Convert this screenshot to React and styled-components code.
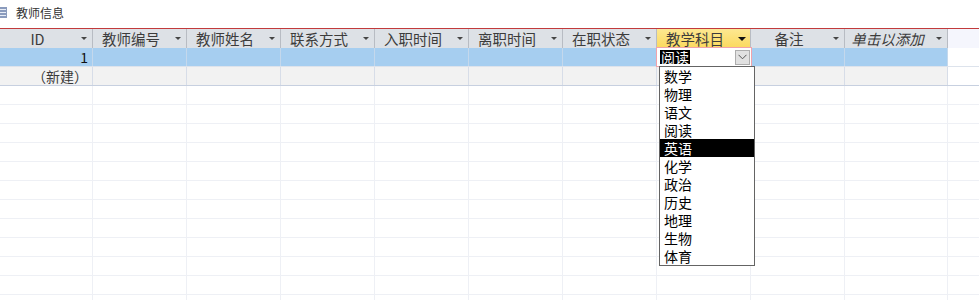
import styled, { createGlobalStyle } from "styled-components";

const GlobalStyle = createGlobalStyle`
  html, body {
    margin: 0;
    padding: 0;
    background: #ffffff;
  }
  body {
    font-family: "Noto Sans CJK SC", "Noto Sans", sans-serif;
    overflow: hidden;
  }
`;

const Page = styled.div`
  position: relative;
  width: 979px;
  height: 300px;
  overflow: hidden;
  background: #ffffff;
`;

const TitleBar = styled.div`
  box-sizing: border-box;
  height: 29px;
  display: flex;
  align-items: center;
  gap: 9px;
  padding-bottom: 4px;
  border-bottom: 1px solid #c23a3c;
  font-size: 12px;
  color: #333333;
`;

const HeaderRow = styled.div`
  display: flex;
  height: 19px;
  background: #f5f6fd;
`;

const HeaderCell = styled.div`
  box-sizing: border-box;
  flex: none;
  width: ${(p) => p.$w}px;
  height: 19px;
  display: flex;
  align-items: center;
  border-right: 1px solid #b8bcc3;
  background: ${(p) =>
    p.$active ? "linear-gradient(#fde891, #fbd95e)" : "#dde1e6"};
  color: #3c3c3c;
  font-size: 14.5px;
  font-style: ${(p) => (p.$italic ? "italic" : "normal")};
`;

const HeaderLabel = styled.span`
  flex: 1;
  text-align: center;
  white-space: nowrap;
  line-height: 19px;
`;

const SortArrow = styled.span`
  flex: none;
  width: 17px;
  display: flex;
  justify-content: center;

  &::after {
    content: "";
    border-left: ${(p) => (p.$active ? 4 : 3)}px solid transparent;
    border-right: ${(p) => (p.$active ? 4 : 3)}px solid transparent;
    border-top: ${(p) => (p.$active ? 4 : 3)}px solid
      ${(p) => (p.$active ? "#111" : "#454545")};
  }
`;

const rowTheme = {
  selected: { bg: "#a6cef0", col: "#c4d8ec", bottom: "#dde3ec" },
  fresh: { bg: "#f2f2f2", col: "#d7dde8", bottom: "#c7d0e0" },
  empty: { bg: "#ffffff", col: "#eef0f5", bottom: "#eef0f5" },
};

const Row = styled.div`
  display: flex;
  height: 19px;
  box-sizing: border-box;
  border-bottom: 1px solid ${(p) => rowTheme[p.$kind].bottom};
`;

const Cell = styled.div`
  box-sizing: border-box;
  flex: none;
  width: ${(p) => p.$w}px;
  height: 18px;
  border-right: 1px solid ${(p) => rowTheme[p.$kind].col};
  background: ${(p) => rowTheme[p.$kind].bg};
  padding-right: 4px;
  text-align: right;
  font-size: 14px;
  line-height: 18px;
  color: ${(p) => (p.$muted ? "#3a3a3a" : "#111111")};
  white-space: nowrap;
`;

const ComboCell = styled.div`
  position: relative;
  z-index: 2;
  box-sizing: border-box;
  flex: none;
  width: ${(p) => p.$w}px;
  height: 18px;
  display: flex;
  align-items: center;
  padding-left: 3px;
  background: #ffffff;
  box-shadow: 0 0 0 1px #f1a3ab;
`;

const ComboText = styled.span`
  display: inline-block;
  height: 14px;
  background: #000000;
  color: #ffffff;
  font-size: 14px;
  line-height: 14px;
  padding: 0 1px;
`;

const DropButton = styled.div`
  box-sizing: border-box;
  margin-left: auto;
  margin-right: 1px;
  width: 15px;
  height: 15px;
  display: flex;
  align-items: center;
  justify-content: center;
  background: #e1e1e1;
  border: 1px solid #adadad;
`;

const DropList = styled.ul`
  position: absolute;
  left: 2px;
  top: 18px;
  box-sizing: border-box;
  width: 96px;
  margin: 0;
  padding: 0;
  list-style: none;
  background: #ffffff;
  border: 1px solid #646464;
`;

const DropItem = styled.li`
  height: 18px;
  padding-left: 4px;
  font-size: 14px;
  line-height: 18px;
  background: ${(p) => (p.$hot ? "#000000" : "transparent")};
  color: ${(p) => (p.$hot ? "#ffffff" : "#000000")};
`;

const Filler = styled.div`
  flex: 1;
`;

const columns = [
  { name: "ID", w: 93 },
  { name: "教师编号", w: 94 },
  { name: "教师姓名", w: 94 },
  { name: "联系方式", w: 94 },
  { name: "入职时间", w: 94 },
  { name: "离职时间", w: 94 },
  { name: "在职状态", w: 94 },
  { name: "教学科目", w: 94, active: true },
  { name: "备注", w: 94 },
  { name: "单击以添加", w: 103, italic: true },
];

const subjects = [
  "数学",
  "物理",
  "语文",
  "阅读",
  "英语",
  "化学",
  "政治",
  "历史",
  "地理",
  "生物",
  "体育",
];

const TableIcon = () => (
  <svg width="7" height="11" viewBox="0 0 7 11">
    <rect x="0" y="0" width="7" height="11" fill="#8a9bbd" />
    <rect x="0" y="2" width="6" height="1" fill="#e8edf6" />
    <rect x="0" y="5" width="6" height="1" fill="#e8edf6" />
    <rect x="0" y="8" width="6" height="1" fill="#e8edf6" />
  </svg>
);

const Chevron = () => (
  <svg width="9" height="6" viewBox="0 0 9 6">
    <path d="M0.5 0.8 L4.5 4.8 L8.5 0.8" fill="none" stroke="#555" strokeWidth="1" />
  </svg>
);

const App = () => {
  const emptyRows = Array.from({ length: 12 });
  return (
    <Page>
      <GlobalStyle />
      <TitleBar>
        <TableIcon />
        <span>教师信息</span>
      </TitleBar>

      <HeaderRow>
        {columns.map((c) => (
          <HeaderCell key={c.name} $w={c.w} $active={c.active} $italic={c.italic}>
            <HeaderLabel>{c.name}</HeaderLabel>
            <SortArrow $active={c.active} />
          </HeaderCell>
        ))}
        <Filler />
      </HeaderRow>

      <Row $kind="selected">
        {columns.map((c, i) => {
          if (c.active)
            return (
              <ComboCell key={c.name} $w={c.w}>
                <ComboText>阅读</ComboText>
                <DropButton>
                  <Chevron />
                </DropButton>
                <DropList>
                  {subjects.map((s) => (
                    <DropItem key={s} $hot={s === "英语"}>
                      {s}
                    </DropItem>
                  ))}
                </DropList>
              </ComboCell>
            );
          return (
            <Cell key={c.name} $w={c.w} $kind="selected">
              {i === 0 ? "1" : ""}
            </Cell>
          );
        })}
        <Filler />
      </Row>

      <Row $kind="fresh">
        {columns.map((c, i) => (
          <Cell key={c.name} $w={c.w} $kind="fresh" $muted>
            {i === 0 ? "（新建）" : ""}
          </Cell>
        ))}
        <Filler />
      </Row>

      {emptyRows.map((_, r) => (
        <Row key={r} $kind="empty">
          {columns.map((c) => (
            <Cell key={c.name} $w={c.w} $kind="empty" />
          ))}
          <Filler />
        </Row>
      ))}
    </Page>
  );
};

export default App;
